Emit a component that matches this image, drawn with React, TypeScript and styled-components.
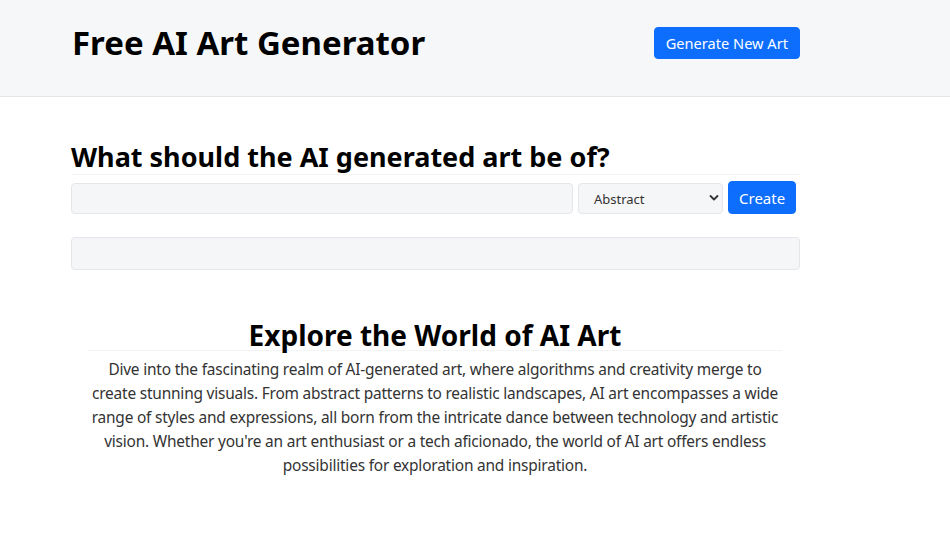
import React from "react";
import styled, { createGlobalStyle } from "styled-components";

const Global = createGlobalStyle`
  * { box-sizing: border-box; }
  body {
    margin: 0;
    background: #ffffff;
    font-family: "Noto Sans", "Open Sans", sans-serif;
    color: #212529;
  }
`;

const Header = styled.header`
  background: #f6f7f9;
  border-bottom: 1px solid #e3e5e8;
  height: 97px;
`;

const HeaderInner = styled.div`
  width: 728px;
  margin-left: 72px;
  height: 100%;
  display: flex;
  align-items: center;
  justify-content: space-between;
  padding-bottom: 10px;
`;

const Title = styled.h1`
  margin: 0 0 2px;
  font-size: 33px;
  font-weight: 700;
  color: #000;
`;

const PrimaryButton = styled.button<{ $size?: "md" | "lg" }>`
  background: #0d6efd;
  color: #fff;
  border: 1px solid #0d6efd;
  border-radius: 4px;
  font-family: inherit;
  font-size: ${(p) => (p.$size === "lg" ? "15px" : "14.6px")};
  padding: ${(p) => (p.$size === "lg" ? "0 10px" : "0 11px")};
  height: ${(p) => (p.$size === "lg" ? "33px" : "32px")};
  cursor: pointer;
`;

const Main = styled.main`
  width: 729px;
  margin-left: 71px;
  padding-top: 44px;
`;

const Question = styled.h2`
  margin: 0;
  font-size: 27px;
  font-weight: 700;
  color: #000;
  line-height: 32px;
  border-bottom: 1px solid #f3f4f6;
  padding-bottom: 1px;
`;

const FormRow = styled.div`
  display: flex;
  align-items: flex-end;
  gap: 5px;
  margin-top: 6px;
`;

const Field = styled.input`
  width: 502px;
  height: 31px;
  background: #f5f6f8;
  border: 1px solid #e4e6e9;
  border-radius: 4px;
  font-family: inherit;
`;

const SelectWrap = styled.div`
  position: relative;
  width: 145px;
  height: 31px;
`;

const Select = styled.select`
  appearance: none;
  width: 100%;
  height: 100%;
  background: #f5f6f8;
  border: 1px solid #e4e6e9;
  border-radius: 4px;
  font-family: inherit;
  font-size: 13px;
  color: #333;
  padding: 0 0 0 15px;
`;

const Chevron = styled.svg`
  position: absolute;
  right: 4px;
  top: 11px;
  pointer-events: none;
`;

const ResultBox = styled.div`
  margin-top: 23px;
  height: 33px;
  background: #f5f6f8;
  border: 1px solid #e4e6e9;
  border-radius: 4px;
`;

const Explore = styled.section`
  margin: 50px 18px 0 17px;
  text-align: center;
`;

const ExploreTitle = styled.h2`
  margin: 0;
  font-size: 28px;
  font-weight: 700;
  color: #000;
  line-height: 30px;
  border-bottom: 1px solid #f3f4f6;
`;

const Paragraph = styled.p`
  margin: 6px 0 0;
  font-size: 15.45px;
  line-height: 24px;
  color: #333;
  letter-spacing: -0.2px;
`;

export default function App() {
  return (
    <>
      <Global />
      <Header>
        <HeaderInner>
          <Title>Free AI Art Generator</Title>
          <PrimaryButton>Generate New Art</PrimaryButton>
        </HeaderInner>
      </Header>
      <Main>
        <Question>What should the AI generated art be of?</Question>
        <FormRow>
          <Field />
          <SelectWrap>
            <Select defaultValue="Abstract">
              <option>Abstract</option>
              <option>Realistic</option>
              <option>Surreal</option>
            </Select>
            <Chevron width="10" height="8" viewBox="0 0 10 8">
              <path d="M1.5 2 L5 5.5 L8.5 2" fill="none" stroke="#333" strokeWidth="1.8" strokeLinecap="round" strokeLinejoin="round" />
            </Chevron>
          </SelectWrap>
          <PrimaryButton $size="lg">Create</PrimaryButton>
        </FormRow>
        <ResultBox />
        <Explore>
          <ExploreTitle>Explore the World of AI Art</ExploreTitle>
          <Paragraph>
            Dive into the fascinating realm of AI-generated art, where algorithms and creativity merge to create stunning visuals. From abstract patterns to realistic landscapes, AI art encompasses a wide range of styles and expressions, all born from the intricate dance between technology and artistic vision. Whether you're an art enthusiast or a tech aficionado, the world of AI art offers endless possibilities for exploration and inspiration.
          </Paragraph>
        </Explore>
      </Main>
    </>
  );
}
